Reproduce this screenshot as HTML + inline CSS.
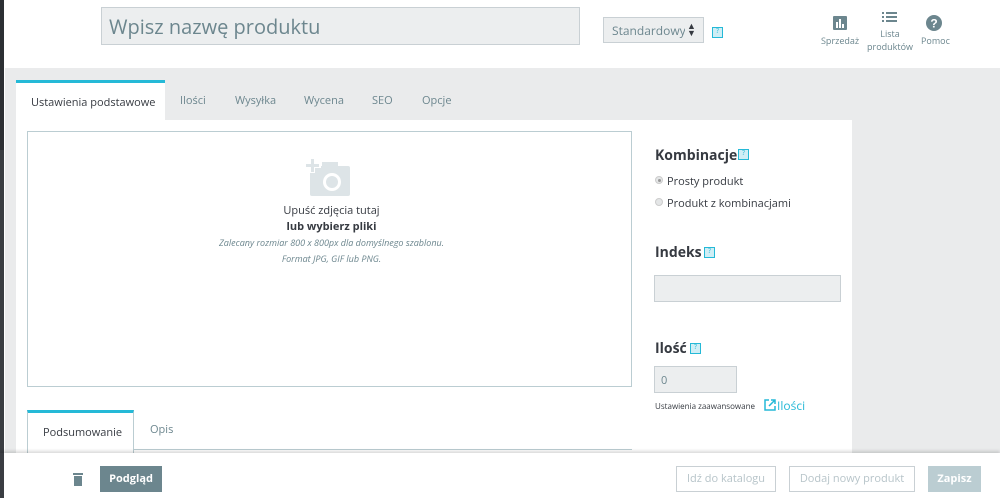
<!DOCTYPE html>
<html><head><meta charset="utf-8"><style>
*{box-sizing:border-box;margin:0;padding:0}
body{width:1000px;height:498px;overflow:hidden;background:#fff;font-family:"Open Sans","Liberation Sans",sans-serif;color:#363a41;position:relative}
.abs{position:absolute}
.help{position:absolute;width:11px;height:11px;border:1.5px solid #25b9d7;background:#cfeef5;font-size:7px;color:#25b9d7;text-align:center;line-height:8px}
</style></head><body>
<div class="abs" style="left:0;top:0;width:4px;height:150px;background:#2c2f33"></div>
<div class="abs" style="left:0;top:150px;width:4px;height:348px;background:#3a3d42"></div>
<div class="abs" style="left:101px;top:7px;width:479px;height:38px;background:#eceeef;border:1px solid #c9d0d4"></div>
<div class="abs" style="left:109px;top:13px;font-size:20px;color:#6c868e">Wpisz nazwę produktu</div>
<div class="abs" style="left:603px;top:17px;width:101px;height:26px;background:#eceeef;border:1px solid #c9d0d4;overflow:hidden"></div>
<div class="abs" style="left:612px;top:22px;width:73px;overflow:hidden;white-space:nowrap;font-size:12px;color:#6c868e">Standardowy p</div>
<div class="abs" style="left:687px;top:22px;font-size:9px;line-height:7px;color:#363a41;text-align:center">▲<br>▼</div>
<div class="help" style="left:712px;top:27px">?</div>
<svg class="abs" style="left:833px;top:16px" width="14" height="14"><rect width="14" height="14" rx="1" fill="#6c868e"/><rect x="3" y="6" width="2" height="6" fill="#fff"/><rect x="6" y="3" width="2" height="9" fill="#fff"/><rect x="9" y="8" width="2" height="4" fill="#fff"/></svg>
<div class="abs" style="left:821px;top:34px;font-size:9px;color:#6c868e">Sprzedaż</div>
<svg class="abs" style="left:882px;top:11px" width="15" height="12"><g fill="#6c868e"><rect y="1" width="2" height="2"/><rect x="4" y="1" width="11" height="2"/><rect y="5" width="2" height="2"/><rect x="4" y="5" width="11" height="2"/><rect y="9" width="2" height="2"/><rect x="4" y="9" width="11" height="2"/></g></svg>
<div class="abs" style="left:866px;top:27px;font-size:9px;color:#6c868e;text-align:center;width:48px;line-height:13px">Lista<br>produktów</div>
<svg class="abs" style="left:926px;top:15px" width="16" height="16"><circle cx="8" cy="8" r="8" fill="#6c868e"/><text x="8" y="12.5" font-size="12" font-weight="bold" fill="#fff" text-anchor="middle" font-family="Liberation Sans">?</text></svg>
<div class="abs" style="left:921px;top:34px;font-size:9px;color:#6c868e">Pomoc</div>
<div class="abs" style="left:5px;top:68px;width:995px;height:385px;background:#eaebec"></div>
<div class="abs" style="left:16px;top:80px;width:149px;height:40px;background:#fff;border-top:3px solid #25b9d7"></div>
<div class="abs" style="left:31px;top:95px;font-size:11px;color:#363a41">Ustawienia podstawowe</div>
<div class="abs" style="left:180px;top:93px;font-size:11px;color:#6c868e">Ilości</div>
<div class="abs" style="left:235px;top:93px;font-size:11px;color:#6c868e">Wysyłka</div>
<div class="abs" style="left:304px;top:93px;font-size:11px;color:#6c868e">Wycena</div>
<div class="abs" style="left:372px;top:93px;font-size:11px;color:#6c868e">SEO</div>
<div class="abs" style="left:422px;top:93px;font-size:11px;color:#6c868e">Opcje</div>
<div class="abs" style="left:16px;top:120px;width:836px;height:333px;background:#fff"></div>
<div class="abs" style="left:27px;top:131px;width:605px;height:256px;border:1px solid #bbcdd2"></div>
<svg class="abs" style="left:305px;top:157px" width="48" height="40"><rect x="5" y="9" width="40" height="30" rx="2" fill="#dde4e7"/><rect x="17" y="5" width="16" height="6" fill="#dde4e7"/><rect x="0" y="6" width="16" height="5" fill="#fff"/><rect x="5" y="1" width="5" height="15" fill="#fff"/><rect x="1" y="7" width="13" height="3" fill="#dde4e7"/><rect x="6" y="2" width="3" height="13" fill="#dde4e7"/><circle cx="27" cy="25" r="9" fill="#fff"/><circle cx="27" cy="25" r="6" fill="#dde4e7"/></svg>
<div class="abs" style="left:29px;top:203px;width:605px;text-align:center;font-size:11px;color:#363a41">Upuść zdjęcia tutaj</div>
<div class="abs" style="left:29px;top:219px;width:605px;text-align:center;font-size:11px;font-weight:bold;color:#363a41">lub wybierz pliki</div>
<div class="abs" style="left:29px;top:236px;width:605px;text-align:center;font-size:9px;font-style:italic;color:#6c868e">Zalecany rozmiar 800 x 800px dla domyślnego szablonu.</div>
<div class="abs" style="left:29px;top:252px;width:605px;text-align:center;font-size:9px;font-style:italic;color:#6c868e">Format JPG, GIF lub PNG.</div>
<div class="abs" style="left:27px;top:410px;width:107px;height:43px;border-top:3px solid #25b9d7;border-left:1px solid #bbcdd2;border-right:1px solid #bbcdd2"></div>
<div class="abs" style="left:134px;top:449px;width:498px;height:1px;background:#bbcdd2"></div>
<div class="abs" style="left:43px;top:425px;font-size:11px;color:#363a41">Podsumowanie</div>
<div class="abs" style="left:150px;top:422px;font-size:11px;color:#6c868e">Opis</div>
<div class="abs" style="left:655px;top:146px;font-size:14px;font-weight:bold;color:#363a41">Kombinacje</div>
<div class="help" style="left:738px;top:149px">?</div>
<div class="abs" style="left:655px;top:176px;width:8px;height:8px;border-radius:50%;background:#e4e6e7;border:1px solid #ccc"></div>
<div class="abs" style="left:658px;top:179px;width:3px;height:3px;border-radius:50%;background:#999"></div>
<div class="abs" style="left:667px;top:174px;font-size:11px;color:#363a41">Prosty produkt</div>
<div class="abs" style="left:655px;top:198px;width:8px;height:8px;border-radius:50%;background:#e4e6e7;border:1px solid #ccc"></div>
<div class="abs" style="left:667px;top:196px;font-size:11px;color:#363a41">Produkt z kombinacjami</div>
<div class="abs" style="left:655px;top:243px;font-size:14px;font-weight:bold;color:#363a41">Indeks</div>
<div class="help" style="left:704px;top:247px">?</div>
<div class="abs" style="left:654px;top:275px;width:187px;height:27px;background:#eceeef;border:1px solid #c9d0d4"></div>
<div class="abs" style="left:655px;top:339px;font-size:14px;font-weight:bold;color:#363a41">Ilość</div>
<div class="help" style="left:690px;top:343px">?</div>
<div class="abs" style="left:654px;top:366px;width:83px;height:27px;background:#eceeef;border:1px solid #c9d0d4;font-size:11px;color:#6c868e;padding:6px 0 0 6px">0</div>
<div class="abs" style="left:655px;top:401px;font-size:8px;color:#363a41">Ustawienia zaawansowane</div>
<svg class="abs" style="left:764px;top:399px" width="12" height="12"><path d="M5 1H1V11H11V7" fill="none" stroke="#25b9d7" stroke-width="1.5"/><path d="M5 7L11 1M7 1H11V5" fill="none" stroke="#25b9d7" stroke-width="1.5"/></svg>
<div class="abs" style="left:777px;top:397px;font-size:12px;color:#25b9d7">Ilości</div>
<div class="abs" style="left:0;top:453px;width:1000px;height:45px;background:#fff;box-shadow:0 -2px 3px rgba(0,0,0,.15)"></div>
<div class="abs" style="left:0;top:453px;width:4px;height:45px;background:#3a3d42"></div>
<svg class="abs" style="left:73px;top:473px" width="10" height="13"><rect x="0" y="0" width="10" height="2" fill="#6c868e"/><rect x="1" y="3" width="8" height="10" fill="#6c868e"/></svg>
<div class="abs" style="left:100px;top:466px;width:62px;height:26px;background:#6c868e;color:#fff;font-size:11px;font-weight:bold;text-align:center;line-height:26px">Podgląd</div>
<div class="abs" style="left:676px;top:466px;width:100px;height:26px;border:1px solid #c9d0d4;color:#b7c4c9;font-size:11px;text-align:center;line-height:24px">Idź do katalogu</div>
<div class="abs" style="left:789px;top:466px;width:126px;height:26px;border:1px solid #c9d0d4;color:#b7c4c9;font-size:11px;text-align:center;line-height:24px">Dodaj nowy produkt</div>
<div class="abs" style="left:928px;top:466px;width:53px;height:26px;background:#bbcdd2;color:#fff;font-size:11px;font-weight:bold;text-align:center;line-height:26px">Zapisz</div>
</body></html>
